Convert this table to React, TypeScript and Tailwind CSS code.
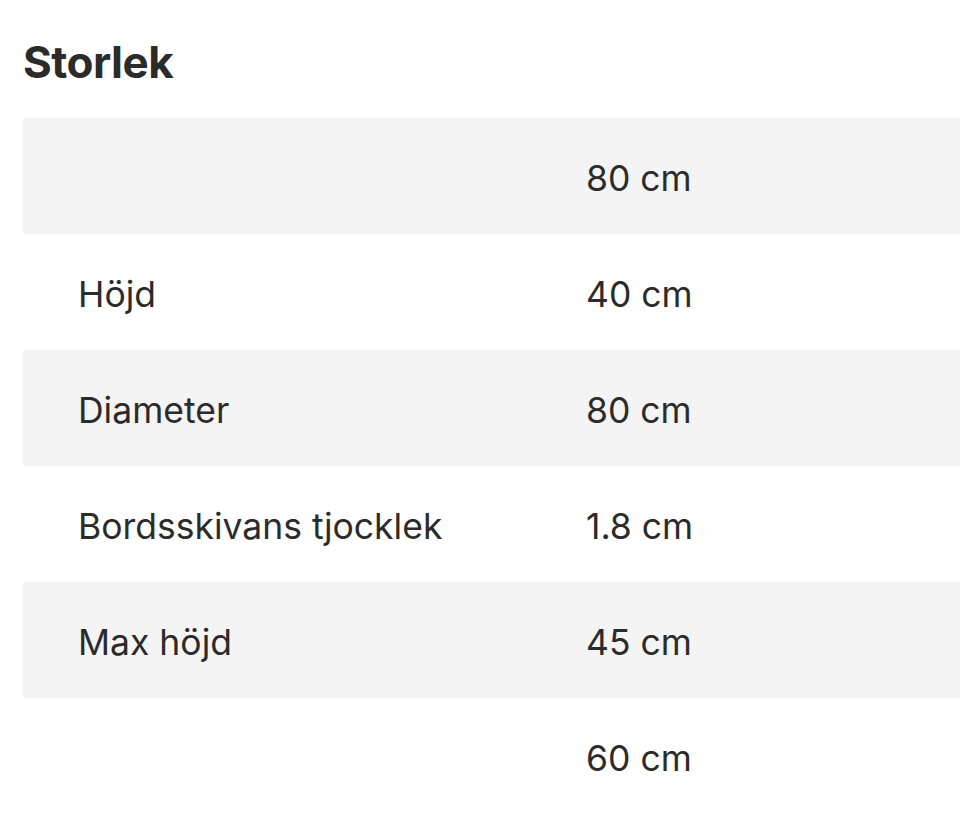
import React from 'react';

const ROWS: { label: string; value: string }[] = [
  { label: '', value: '80 cm' },
  { label: 'Höjd', value: '40 cm' },
  { label: 'Diameter', value: '80 cm' },
  { label: 'Bordsskivans tjocklek', value: '1.8 cm' },
  { label: 'Max höjd', value: '45 cm' },
  { label: '', value: '60 cm' },
];

export default function App() {
  return (
    <div className="min-h-[821px] bg-white pl-[23px] text-[#2b2b2b] font-['Inter',sans-serif]">
      {/* Section title */}
      <h2 className="pt-[35px] text-[44px] leading-[54px] font-bold tracking-[-0.5px]">Storlek</h2>

      {/* Size table */}
      <div className="mt-[29px]">
        {ROWS.map((row, i) => (
          <div
            key={i}
            className={`flex items-center h-[116px] pt-[5px] text-[35.5px] leading-none ${i % 2 === 0 ? 'bg-[#f4f4f4]' : 'bg-white'}`}
          >
            <div className="w-[563px] pl-[55px]">{row.label}</div>
            <div>{row.value}</div>
          </div>
        ))}
      </div>
    </div>
  );
}
